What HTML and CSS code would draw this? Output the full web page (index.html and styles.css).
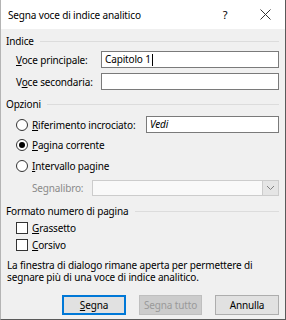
FILE: index.html
```html
<!DOCTYPE html>
<html>
<head>
<link rel="stylesheet" href="styles.css">
</head>
<body>
<div class="dialog">
  <div class="titlebar">
    <span class="title">Segna voce di indice analitico</span>
    <span class="help">?</span>
    <span class="close">
      <svg width="11" height="11" viewBox="0 0 11 11"><path d="M0.5 0.5 L10.5 10.5 M10.5 0.5 L0.5 10.5" stroke="#333" stroke-width="1"/></svg>
    </span>
  </div>

  <div class="content">
    <div class="group-title g-indice"><span>Indice</span></div>
    <div class="field row-principale">
      <label><u>V</u>oce principale:</label>
      <div class="input">Capitolo 1<span class="caret"></span></div>
    </div>
    <div class="field row-secondaria">
      <label>V<u>o</u>ce secondaria:</label>
      <div class="input"></div>
    </div>

    <div class="group-title g-opzioni"><span>Opzioni</span></div>
    <div class="option row-rif">
      <span class="radio"></span>
      <label><u>R</u>iferimento incrociato:</label>
      <div class="input vedi">Vedi</div>
    </div>
    <div class="option row-pagina">
      <span class="radio checked"></span>
      <label><u>P</u>agina corrente</label>
    </div>
    <div class="option row-intervallo">
      <span class="radio"></span>
      <label><u>I</u>ntervallo pagine</label>
    </div>
    <div class="option row-segnalibro">
      <label class="disabled">Segnalibro:</label>
      <div class="select">
        <span class="arrow">
          <svg width="9" height="6" viewBox="0 0 9 6"><path d="M1 1 L4.5 4.5 L8 1" fill="none" stroke="#808080" stroke-width="1"/></svg>
        </span>
      </div>
    </div>

    <div class="group-title g-formato"><span>Formato numero di pagina</span></div>
    <div class="option row-grassetto">
      <span class="check"></span>
      <label><u>G</u>rassetto</label>
    </div>
    <div class="option row-corsivo">
      <span class="check"></span>
      <label><u>C</u>orsivo</label>
    </div>

    <p class="note">La finestra di dialogo rimane aperta per permettere di segnare più di una voce di indice analitico.</p>

    <div class="buttons">
      <button class="btn default"><u>S</u>egna</button>
      <button class="btn disabled-btn">Segna tutto</button>
      <button class="btn">Annulla</button>
    </div>
  </div>
</div>
</body>
</html>
```

FILE: styles.css
```css
body {
  margin: 0;
  font-family: "Noto Sans", "Open Sans", sans-serif;
  font-size: 10px;
  letter-spacing: -0.15px;
  color: #000;
  background: #fff;
}

.dialog {
  width: 286px;
  height: 320px;
  box-sizing: border-box;
  border-left: 1px solid #b4b4b4;
  border-right: 1px solid #5a5a5a;
  border-bottom: 1px solid #5a5a5a;
  background-color: #f0f0f0;
  overflow: hidden;
}

/* title bar */
.titlebar {
  height: 29px;
  background: #fff;
  display: flex;
  align-items: center;
  padding-left: 7px;
}

.title {
  font-size: 10px;
  flex: 1;
}

.help {
  font-size: 11px;
  width: 40px;
  text-align: center;
}

.close {
  width: 40px;
  display: flex;
  justify-content: center;
}

.content {
  padding: 0 6px 0 5px;
}

u {
  text-decoration: underline;
  text-underline-offset: 1px;
}

/* group headers with line */
.group-title {
  height: 16px;
  display: flex;
  align-items: center;
  gap: 6px;
}

.group-title::after {
  content: "";
  flex: 1;
  height: 1px;
  background: #dcdcdc;
}

.g-indice { margin-top: 4px; }
.g-opzioni { margin-top: 6px; }
.g-formato { margin-top: 7px; }

/* label + text box rows */
.field {
  display: flex;
  align-items: center;
  height: 17px;
}

.field label {
  width: 85px;
  padding-left: 10px;
}

.row-principale { margin-top: 2px; }
.row-secondaria { margin-top: 5px; }

.input {
  flex: 1;
  height: 17px;
  box-sizing: border-box;
  background: #fff;
  border: 1px solid #7a7a7a;
  padding-left: 3px;
  line-height: 15px;
  display: flex;
  align-items: center;
}

.caret {
  width: 1px;
  height: 12px;
  background: #000;
  margin-left: 1px;
}

/* radio / checkbox rows */
.option {
  display: flex;
  align-items: center;
  height: 16px;
  padding-left: 10px;
}

.option label {
  margin-left: 4px;
}

.row-rif { margin-top: 4px; height: 17px; }
.row-rif label { width: 114px; }
.vedi { font-style: italic; }
.row-pagina { margin-top: 4px; }
.row-intervallo { margin-top: 5px; }
.row-segnalibro { margin-top: 6px; padding-left: 26px; }
.row-segnalibro label { margin-left: 0; width: 60px; }
.row-grassetto { margin-top: 1px; }
.row-corsivo { margin-top: 1px; }

.disabled { color: #8a8a8a; }

.radio {
  width: 12px;
  height: 12px;
  box-sizing: border-box;
  border: 1px solid #333;
  border-radius: 50%;
  background: #fff;
  display: flex;
  align-items: center;
  justify-content: center;
}

.radio.checked::after {
  content: "";
  width: 6px;
  height: 6px;
  border-radius: 50%;
  background: #000;
}

.check {
  width: 12px;
  height: 12px;
  box-sizing: border-box;
  border: 1px solid #333;
  background: #fff;
}

.select {
  flex: 1;
  height: 16px;
  box-sizing: border-box;
  border: 1px solid #cccccc;
  background: #f9f9f9;
  display: flex;
  justify-content: flex-end;
}

.select .arrow {
  width: 15px;
  background: #e5e5e5;
  border-left: 1px solid #cccccc;
  display: flex;
  align-items: center;
  justify-content: center;
}

.note {
  margin: 6px 0 0 1px;
  line-height: 12px;
}

/* bottom buttons */
.buttons {
  display: flex;
  justify-content: flex-end;
  gap: 13px;
  margin-top: 12px;
}

.btn {
  font-family: inherit;
  font-size: 10px;
  letter-spacing: -0.15px;
  height: 20px;
  width: 64px;
  padding: 0;
  background: #e1e1e1;
  border: 1px solid #adadad;
  color: #000;
}

.btn.default {
  border: 1px solid #0078d7;
  box-shadow: inset 0 0 0 1px #0078d7;
}

.btn.disabled-btn {
  width: 63px;
  background: #cccccc;
  border-color: #bfbfbf;
  color: #9a9a9a;
}
```
